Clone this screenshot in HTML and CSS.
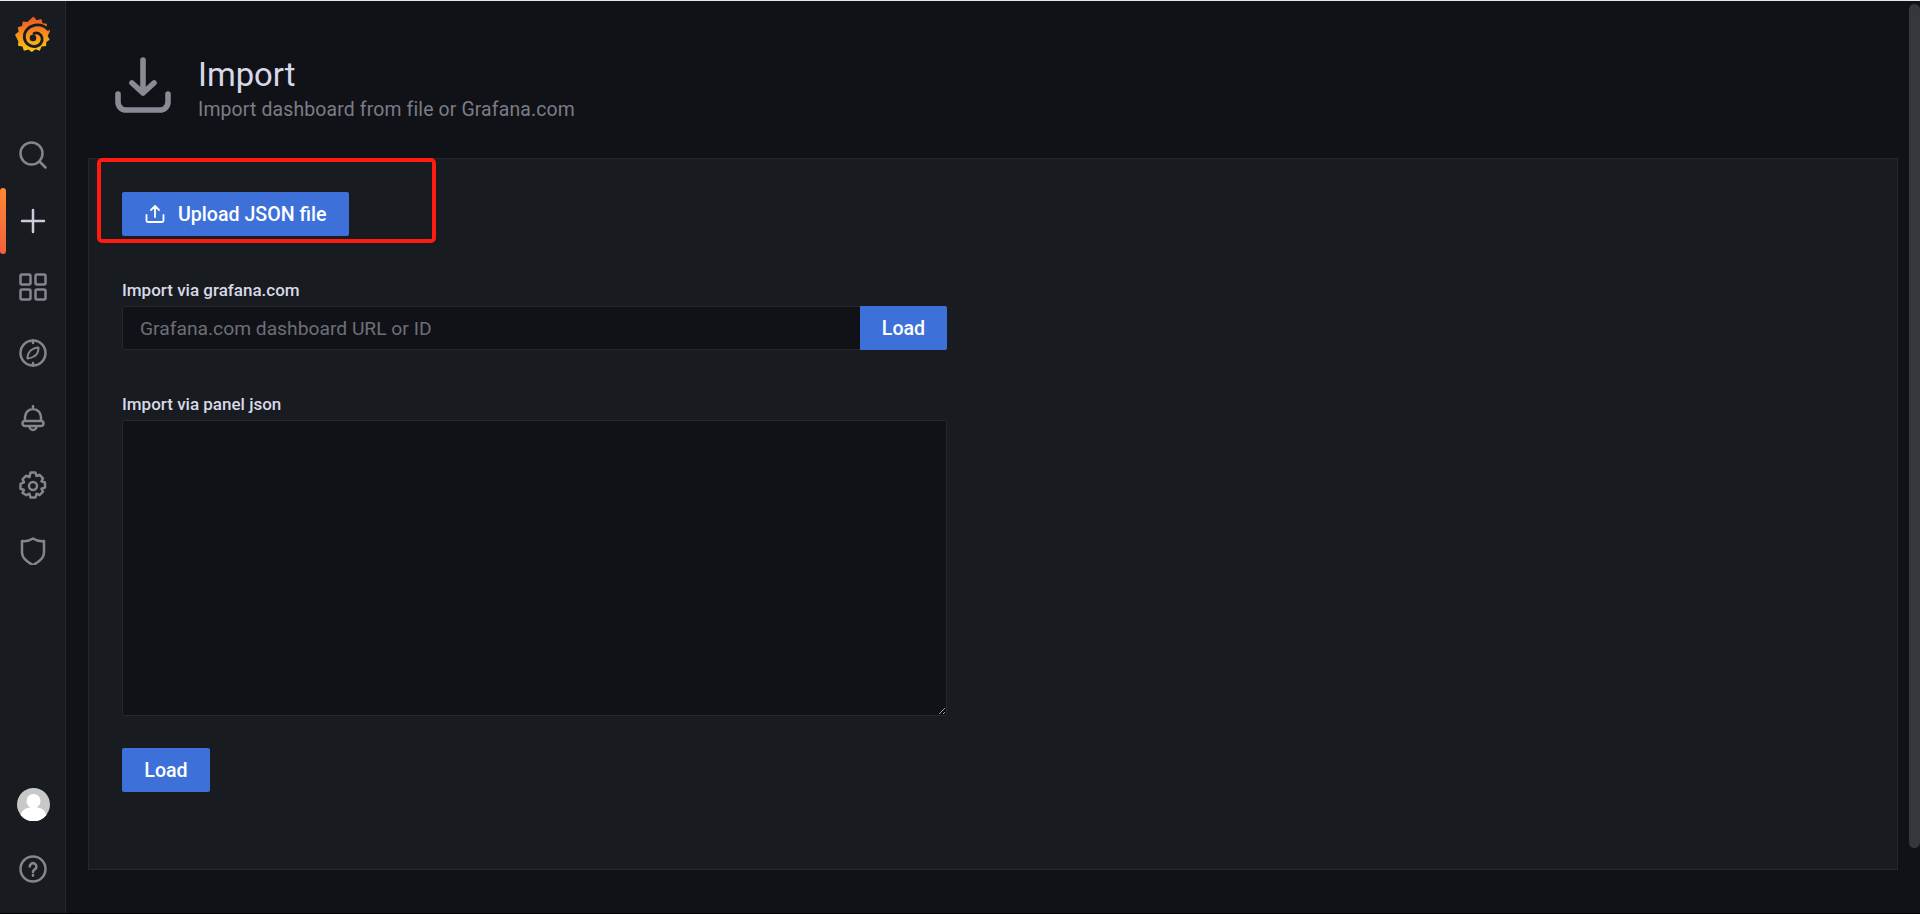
FILE: index.html
```html
<!DOCTYPE html>
<html lang="en">
<head>
<meta charset="utf-8">
<title>Import</title>
<link rel="stylesheet" href="styles.css">
</head>
<body>
<div class="app">
  <nav class="sidebar">
    <a class="logo">
      <svg width="36" height="38" viewBox="0 0 36 38">
        <defs><linearGradient id="lg" x1="0" y1="1" x2="0" y2="0"><stop offset="0" stop-color="#fccb0c"/><stop offset=".45" stop-color="#f8931d"/><stop offset="1" stop-color="#ef5527"/></linearGradient></defs>
        <path fill="url(#lg)" d="M18.500 0.500l3.200 3.700 4.600-1.200 1.200 4.200 4.300 0.600-0.100 4.400 3.400 1.900-0.800 2.400-1.600 3.600 2 3.600-3.400 2.200-0.200 4.200-4.600 0.400-1.700 4.200-4.400-1.400-3.600 2.800-3.400-2.600-4.500 1.300-1.400-4.400-4.500-0.700 0.300-4.500L0 18.700l3.700-3.100-1-4.300 4.400-1.400 0.700-4.500 4.600 0.600z"/>
        <path fill="none" stroke="#1b1d21" stroke-width="2.800" stroke-linecap="round" d="M33 13.500C29 9.500 24.500 8.300 20 9.200C13 10.500 9 15.500 9.300 21.500C10 27.500 15 31 20 30.500C25 30 28 25.500 27 21.500C26 17.500 22 16 19 17.500"/>
        <circle cx="18" cy="22" r="3.300" fill="#1b1d21"/>
      </svg>
    </a>
    <div class="nav-main">
      <a class="nav-item">
        <svg class="nav-ico" viewBox="0 0 28 28"><circle cx="12.500" cy="12.500" r="11"/><path d="M20.500 20.500l6 6"/></svg>
      </a>
      <a class="nav-item active">
        <svg class="nav-ico light" viewBox="0 0 28 28"><path d="M14 3v22M3 14h22"/></svg>
      </a>
      <a class="nav-item">
        <svg class="nav-ico" viewBox="0 0 28 28"><rect x="1.500" y="1.500" width="10" height="10" rx="1.500"/><rect x="16.500" y="1.500" width="10" height="10" rx="1.500"/><rect x="1.500" y="16.500" width="10" height="10" rx="1.500"/><rect x="16.500" y="16.500" width="10" height="10" rx="1.500"/></svg>
      </a>
      <a class="nav-item">
        <svg class="nav-ico" viewBox="0 0 28 28"><circle cx="14" cy="14" r="12.500"/><path d="M19.500 8.500C19.500 12.500 18 16 14.800 17.500C12.500 18.800 10.500 19.500 8.500 19.500C8.500 16 10 12.500 13 10.500C15 9.300 17.500 8.500 19.500 8.500z" class="thin"/><path d="M14 1.500v2.500M14 24v2.500"/></svg>
      </a>
      <a class="nav-item">
        <svg class="nav-ico" viewBox="0 0 28 28"><path d="M14 1v3M6 16v-4a8 8 0 0 1 16 0v4M6 16h16a2.500 2.500 0 0 1 0 5H6a2.500 2.500 0 0 1 0-5zM10.500 21.500a3.500 3.500 0 0 0 7 0" stroke-linejoin="round"/></svg>
      </a>
      <a class="nav-item">
        <svg class="nav-ico" viewBox="0 0 28 28"><path stroke-linejoin="round" d="M11.500 1.500h5l1 3.500 3-1.200 3.500 3.500-1.500 3 3.500 1.200v5l-3.500 1.200 1.500 3-3.500 3.500-3-1.500-1 3.800h-5l-1-3.800-3 1.500L3.500 22l1.500-3-3.500-1.200v-5L5 11.300l-1.500-3L7 4.800l3.500 1.200z"/><circle cx="14" cy="15" r="4"/></svg>
      </a>
      <a class="nav-item">
        <svg class="nav-ico" viewBox="0 0 28 28"><path stroke-linejoin="round" d="M14 1.500c3 2 7 3 11 2.500v11.500c0 5-5 9.500-11 12.500C8 25 3 20.500 3 15.500V4c4 .5 8-.5 11-2.500z"/></svg>
      </a>
    </div>
    <div class="nav-bottom">
      <a class="avatar">
        <svg width="33" height="33" viewBox="0 0 33 33"><circle cx="16.500" cy="16.500" r="16.500" fill="#c8c8c8"/><circle cx="16.500" cy="13" r="7" fill="#fff"/><path d="M3.500 27c2-6 7-8 13-8s11 2 13 8a16.500 16.500 0 0 1-26 0z" fill="#fff"/></svg>
      </a>
      <a class="nav-item help">
        <svg class="nav-ico" viewBox="0 0 28 28"><circle cx="14" cy="14" r="12.500"/><path class="q" d="M10.800 11.500a3.300 3.300 0 1 1 5 2.800c-1.200.8-1.800 1.400-1.800 2.700"/><path class="q" d="M14 20v.6"/></svg>
      </a>
    </div>
  </nav>
  <main class="main">
    <header class="page-head">
      <svg class="head-ico" viewBox="0 0 56 56"><path d="M28 3v33M17 26l11 10 11-10M3 37v8a8 8 0 0 0 8 8h34a8 8 0 0 0 8-8v-8"/></svg>
      <div class="head-text">
        <h1 class="title">Import</h1>
        <p class="subtitle">Import dashboard from file or Grafana.com</p>
      </div>
    </header>
    <section class="panel">
      <button class="btn upload">
        <svg class="up-ico" viewBox="0 0 20 20"><path d="M10 13V2M6 6l4-4 4 4M1.500 11v5.500A1.500 1.500 0 0 0 3 18h14a1.500 1.500 0 0 0 1.500-1.500V11"/></svg>
        <span class="btn-text">Upload JSON file</span>
      </button>
      <label class="label first">Import via grafana.com</label>
      <div class="input-row">
        <input class="input" type="text" placeholder="Grafana.com dashboard URL or ID">
        <button class="btn addon"><span class="btn-text">Load</span></button>
      </div>
      <label class="label second">Import via panel json</label>
      <textarea class="textarea"></textarea>
      <button class="btn load"><span class="btn-text">Load</span></button>
    </section>
    <div class="annotation"></div>
    <div class="thumb"></div>
  </main>
</div>
</body>
</html>
```
FILE: styles.css
```css
* { box-sizing: border-box; }
html, body { margin: 0; height: 100%; overflow: hidden; }
body {
  background: #111217;
  font-family: Roboto, "Liberation Sans", sans-serif;
  color: #ccccdc;
  border-top: 1px solid #e8e8e8;
  border-bottom: 1px solid #000;
}
.app { display: flex; height: 912px; }
.sidebar {
  width: 66px;
  flex: none;
  background: #181b1f;
  border-right: 1px solid #25272b;
  display: flex;
  flex-direction: column;
  align-items: stretch;
}
.logo { display: flex; justify-content: center; padding-top: 15px; height: 121px; }
.nav-main { display: flex; flex-direction: column; }
.nav-item { height: 66px; display: flex; align-items: center; justify-content: center; position: relative; }
.nav-item.active::before {
  content: "";
  position: absolute;
  left: 0;
  top: 0;
  width: 6px;
  height: 66px;
  border-radius: 3px;
  background: linear-gradient(180deg, #ff8833, #f55f3e);
}
.nav-ico { width: 28px; height: 28px; fill: none; stroke: #84858d; stroke-width: 2.500; stroke-linecap: round; }
.nav-ico.light { stroke: #ccccdc; }
.nav-ico .thin { stroke-width: 2; stroke-linejoin: round; }
.nav-ico .q { stroke-width: 2.600; }
.nav-bottom { margin-top: auto; display: flex; flex-direction: column; align-items: center; padding-bottom: 13px; }
.avatar { display: block; height: 33px; width: 33px; margin: 0 0 17px 2px; }
.nav-item.help { height: 62px; width: 100%; }

.main { flex: 1; min-width: 0; position: relative; padding: 0 22px; }
.page-head { display: flex; align-items: flex-start; height: 157px; padding: 56px 0 0 27px; }
.head-ico { width: 56px; height: 56px; fill: none; stroke: #8a8a94; stroke-width: 5.600; stroke-linecap: round; stroke-linejoin: round; flex: none; }
.head-text { margin: -1px 0 0 27px; }
.title { margin: 0; font-size: 32.800px; line-height: 38px; font-weight: 400; color: #d8d9e8; }
.subtitle { margin: 5px 0 0; font-size: 19.400px; line-height: 22px; letter-spacing: .15px; color: #7b7d86; }

.panel {
  height: 712px;
  background: #181b1f;
  border: 1px solid #25272b;
  padding: 33px 33px 0;
  display: flex;
  flex-direction: column;
  align-items: flex-start;
}
.btn {
  height: 44px;
  background: #3d71d9;
  color: #fff;
  border: 0;
  border-radius: 2px;
  font: 500 19.600px/44px Roboto, "Liberation Sans", sans-serif;
  padding: 0 21px;
  display: flex;
  align-items: center;
  flex: none;
}
.btn-text { padding-top: 2px; }
.upload { width: 227px; padding-left: 23px; white-space: nowrap; }
.up-ico { width: 20px; height: 20px; fill: none; stroke: #fff; stroke-width: 1.800; stroke-linecap: round; stroke-linejoin: round; margin-right: 13px; flex: none; }
.label { display: block; font-size: 17px; line-height: 20px; font-weight: 500; color: #d8d9e8; }
.label.first { margin-top: 44px; margin-bottom: 6px; }
.label.second { margin-top: 44px; margin-bottom: 6px; }
.input-row { display: flex; width: 825px; height: 44px; flex: none; }
.input {
  flex: 1;
  min-width: 0;
  height: 44px;
  background: #111217;
  border: 1px solid #25272b;
  border-right: 0;
  border-radius: 2px 0 0 2px;
  padding: 0 17px;
  color: #ccc;
  font: 19.250px Roboto, "Liberation Sans", sans-serif;
  outline: none;
}
.input::placeholder { color: #6d6f77; opacity: 1; }
.addon { width: 87px; border-radius: 0 2px 2px 0; justify-content: center; padding: 0; }
.textarea {
  width: 825px;
  height: 296px;
  flex: none;
  background: #111217;
  border: 1px solid #25272b;
  border-radius: 2px;
  outline: none;
  display: block;
}
.load { width: 88px; margin-top: 32px; justify-content: center; padding: 0; }

.annotation {
  position: absolute;
  left: 31px;
  top: 157px;
  width: 339px;
  height: 85px;
  border: 4px solid #ff1a12;
  border-radius: 5px;
}
.thumb {
  position: absolute;
  right: 0;
  top: 3px;
  width: 11px;
  height: 844px;
  border-radius: 6px;
  background: #36373d;
}
```
